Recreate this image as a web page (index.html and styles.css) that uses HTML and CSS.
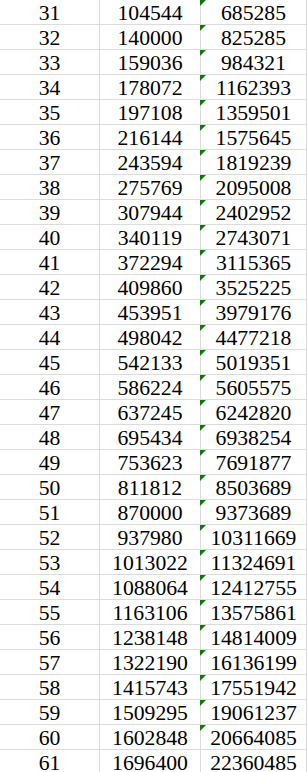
FILE: index.html
```html
<!DOCTYPE html>
<html>
<head>
<meta charset="utf-8">
<link rel="stylesheet" href="styles.css">
</head>
<body>
<div class="sheet">
<div class="row"><div class="cell a">31</div><div class="cell b">104544</div><div class="cell c flag">685285</div></div>
<div class="row"><div class="cell a">32</div><div class="cell b">140000</div><div class="cell c flag">825285</div></div>
<div class="row"><div class="cell a">33</div><div class="cell b">159036</div><div class="cell c flag">984321</div></div>
<div class="row"><div class="cell a">34</div><div class="cell b">178072</div><div class="cell c flag">1162393</div></div>
<div class="row"><div class="cell a">35</div><div class="cell b">197108</div><div class="cell c flag">1359501</div></div>
<div class="row"><div class="cell a">36</div><div class="cell b">216144</div><div class="cell c flag">1575645</div></div>
<div class="row"><div class="cell a">37</div><div class="cell b">243594</div><div class="cell c flag">1819239</div></div>
<div class="row"><div class="cell a">38</div><div class="cell b">275769</div><div class="cell c flag">2095008</div></div>
<div class="row"><div class="cell a">39</div><div class="cell b">307944</div><div class="cell c flag">2402952</div></div>
<div class="row"><div class="cell a">40</div><div class="cell b">340119</div><div class="cell c flag">2743071</div></div>
<div class="row"><div class="cell a">41</div><div class="cell b">372294</div><div class="cell c flag">3115365</div></div>
<div class="row"><div class="cell a">42</div><div class="cell b">409860</div><div class="cell c flag">3525225</div></div>
<div class="row"><div class="cell a">43</div><div class="cell b">453951</div><div class="cell c flag">3979176</div></div>
<div class="row"><div class="cell a">44</div><div class="cell b">498042</div><div class="cell c flag">4477218</div></div>
<div class="row"><div class="cell a">45</div><div class="cell b">542133</div><div class="cell c flag">5019351</div></div>
<div class="row"><div class="cell a">46</div><div class="cell b">586224</div><div class="cell c flag">5605575</div></div>
<div class="row"><div class="cell a">47</div><div class="cell b">637245</div><div class="cell c flag">6242820</div></div>
<div class="row"><div class="cell a">48</div><div class="cell b">695434</div><div class="cell c flag">6938254</div></div>
<div class="row"><div class="cell a">49</div><div class="cell b">753623</div><div class="cell c flag">7691877</div></div>
<div class="row"><div class="cell a">50</div><div class="cell b">811812</div><div class="cell c flag">8503689</div></div>
<div class="row"><div class="cell a">51</div><div class="cell b">870000</div><div class="cell c flag">9373689</div></div>
<div class="row"><div class="cell a">52</div><div class="cell b">937980</div><div class="cell c flag">10311669</div></div>
<div class="row"><div class="cell a">53</div><div class="cell b">1013022</div><div class="cell c flag">11324691</div></div>
<div class="row"><div class="cell a">54</div><div class="cell b">1088064</div><div class="cell c flag">12412755</div></div>
<div class="row"><div class="cell a">55</div><div class="cell b">1163106</div><div class="cell c flag">13575861</div></div>
<div class="row"><div class="cell a">56</div><div class="cell b">1238148</div><div class="cell c flag">14814009</div></div>
<div class="row"><div class="cell a">57</div><div class="cell b">1322190</div><div class="cell c flag">16136199</div></div>
<div class="row"><div class="cell a">58</div><div class="cell b">1415743</div><div class="cell c flag">17551942</div></div>
<div class="row"><div class="cell a">59</div><div class="cell b">1509295</div><div class="cell c flag">19061237</div></div>
<div class="row"><div class="cell a">60</div><div class="cell b">1602848</div><div class="cell c flag">20664085</div></div>
<div class="row"><div class="cell a">61</div><div class="cell b">1696400</div><div class="cell c">22360485</div></div>
</div>
</body>
</html>
```

FILE: styles.css
```css
html, body {
  margin: 0;
  padding: 0;
  background: #ffffff;
  overflow: hidden;
}
.sheet {
  display: flex;
  flex-direction: column;
  font-family: "Liberation Serif", "Times New Roman", serif;
  font-size: 21.7px;
  color: #000000;
}
.row {
  display: flex;
  height: 25px;
  box-sizing: border-box;
  border-bottom: 1px solid #dcdcdc;
}
.cell {
  position: relative;
  box-sizing: border-box;
  height: 24px;
  padding-top: 2px;
  line-height: 22px;
  text-align: center;
  border-right: 1px solid #dcdcdc;
  white-space: nowrap;
}
.a { width: 100px; }
.b { width: 101px; }
.c { width: 106px; }
.flag::before {
  content: "";
  position: absolute;
  left: -1px;
  top: 0;
  width: 6px;
  height: 6px;
  background: #0b7a0b;
  clip-path: polygon(0 0, 100% 0, 0 100%);
}
```
